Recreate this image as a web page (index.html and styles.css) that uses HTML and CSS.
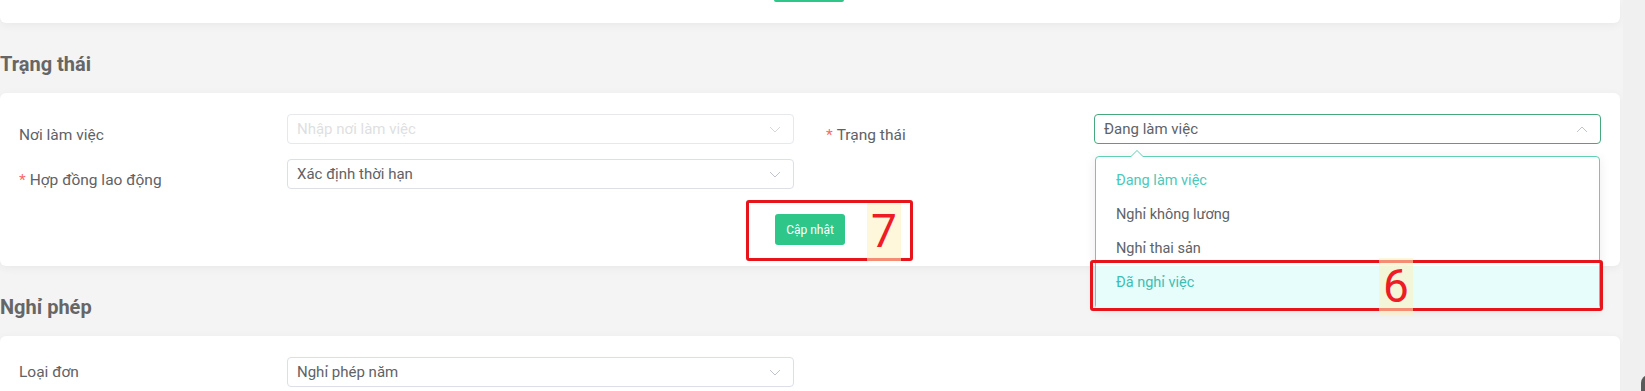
FILE: index.html
```html
<!DOCTYPE html>
<html lang="vi">
<head>
  <meta charset="UTF-8" />
  <meta name="viewport" content="width=device-width, initial-scale=1.0" />
  <title>Trạng thái nhân viên</title>
  <link rel="stylesheet" href="styles.css">
</head>
<body>
  <div class="page">
    <div class="main">
      <!-- Card phía trên (chỉ thấy phần đáy) -->
      <div class="card card-top">
        <span class="btn-stub"></span>
      </div>

      <h2 class="section-title">Trạng thái</h2>

      <div class="card">
        <div class="form-grid labels-low">
          <div class="form-item">
            <label class="form-label">Nơi làm việc</label>
            <div class="select is-disabled">
              <span class="select-text placeholder">Nhập nơi làm việc</span>
              <svg class="chevron" width="12" height="7" viewBox="0 0 12 7"><polyline points="1,1 6,6 11,1" /></svg>
            </div>
          </div>

          <div class="form-item">
            <label class="form-label"><span class="req">*</span>Trạng thái</label>
            <div class="select is-focus">
              <span class="select-text">Đang làm việc</span>
              <svg class="chevron" width="12" height="7" viewBox="0 0 12 7"><polyline points="1,6 6,1 11,6" /></svg>

              <!-- Danh sách tuỳ chọn -->
              <ul class="dropdown">
                <li class="dropdown-item selected">Đang làm việc</li>
                <li class="dropdown-item">Nghỉ không lương</li>
                <li class="dropdown-item">Nghỉ thai sản</li>
                <li class="dropdown-item hover">Đã nghỉ việc</li>
              </ul>
              <div class="mark mark-6">
                <span class="mark-num">6</span>
              </div>
            </div>
          </div>

          <div class="form-item">
            <label class="form-label"><span class="req">*</span>Hợp đồng lao động</label>
            <div class="select">
              <span class="select-text">Xác định thời hạn</span>
              <svg class="chevron" width="12" height="7" viewBox="0 0 12 7"><polyline points="1,1 6,6 11,1" /></svg>
            </div>
          </div>
          <div class="form-item"></div>
        </div>

        <div class="actions">
          <div class="btn-wrap">
            <button class="btn-primary">Cập nhật</button>
            <div class="mark mark-7">
              <span class="mark-num">7</span>
            </div>
          </div>
        </div>
      </div>

      <h2 class="section-title">Nghỉ phép</h2>

      <div class="card card-last">
        <div class="form-grid">
          <div class="form-item">
            <label class="form-label">Loại đơn</label>
            <div class="select">
              <span class="select-text">Nghỉ phép năm</span>
              <svg class="chevron" width="12" height="7" viewBox="0 0 12 7"><polyline points="1,1 6,6 11,1" /></svg>
            </div>
          </div>
        </div>
      </div>
    </div>

    <div class="track">
      <span class="fab"></span>
    </div>
  </div>
</body>
</html>
```

FILE: styles.css
```css
/* Chung */
body {
  margin: 0;
  background: #f4f4f4;
  font-family: Roboto, "Noto Sans", Arial, sans-serif;
  color: #606266;
  overflow: hidden;
}

.page {
  display: flex;
  height: 391px;
}

.main {
  width: 1620px;
  flex-shrink: 0;
}

.track {
  flex: 1;
  margin-left: 3px;
  background: #f0f0f0;
  position: relative;
}

.fab {
  position: absolute;
  right: -12px;
  bottom: -14px;
  width: 16px;
  height: 30px;
  border-radius: 8px;
  background: #5a5a5a;
}

/* Cards */
.card {
  background: #fff;
  border-radius: 6px;
  box-shadow: 0 2px 10px rgba(0, 0, 0, 0.05);
  padding: 21px 19px;
  position: relative;
}

.card-top {
  height: 23px;
  padding: 0;
  border-radius: 0 0 6px 6px;
  display: flex;
  justify-content: center;
}

.btn-stub {
  width: 70px;
  height: 2px;
  background: #2fc68a;
  border-radius: 0 0 3px 3px;
  margin-left: -2px;
}

.card-last {
  border-radius: 6px 6px 0 0;
}

.section-title {
  margin: 0;
  padding: 30px 0 18px;
  line-height: 22px;
  font-size: 20px;
  font-weight: 700;
  color: #666;
}

/* Formulario */
.form-grid {
  display: grid;
  grid-template-columns: 1fr 1fr;
  column-gap: 32px;
  row-gap: 15px;
}

.form-item {
  display: flex;
  align-items: center;
  min-height: 30px;
}

.form-label {
  width: 268px;
  flex-shrink: 0;
  font-size: 15.5px;
  color: #606266;
}

.labels-low .form-label {
  padding-top: 11px;
}

.req {
  color: #f56c6c;
  margin-right: 4px;
}

.select {
  flex: 1;
  position: relative;
  height: 30px;
  box-sizing: border-box;
  border: 1px solid #dcdfe6;
  border-radius: 4px;
  background: #fff;
  display: flex;
  align-items: center;
  padding: 0 9px;
}

.select.is-disabled {
  border-color: #e6e8ec;
}

.select.is-focus {
  border-color: #47a880;
}

.select-text {
  flex: 1;
  font-size: 15px;
  color: #606266;
}

.select-text.placeholder {
  color: #dedfe2;
}

.chevron {
  fill: none;
  stroke: #c0c4cc;
  stroke-width: 1;
  margin-right: 3px;
}

.is-disabled .chevron {
  stroke: #d6d8dd;
}

/* Desplegable */
.dropdown {
  position: absolute;
  top: calc(100% + 13px);
  left: 0;
  right: 0;
  margin: 0;
  padding: 7px 0 0;
  list-style: none;
  background: #fff;
  border: 1px solid #5fd0b4;
  border-radius: 4px;
  box-shadow: 0 2px 12px rgba(0, 0, 0, 0.08);
  z-index: 5;
}

.dropdown::before,
.dropdown::after {
  content: "";
  position: absolute;
  left: 35px;
  border: 6px solid transparent;
  border-top-width: 0;
}

.dropdown::before {
  top: -7px;
  border-bottom-color: #5fd0b4;
}

.dropdown::after {
  top: -6px;
  border-bottom-color: #fff;
}

.dropdown-item {
  height: 34px;
  line-height: 34px;
  padding: 0 20px;
  font-size: 14.5px;
  color: #606266;
}

.dropdown-item.selected {
  color: #4cc8bc;
}

.dropdown-item.hover {
  height: 42px;
  line-height: 34px;
  background: #e6fdfc;
  color: #3dbdb3;
}

/* Botón */
.actions {
  display: flex;
  justify-content: center;
  margin-top: 25px;
}

.btn-wrap {
  position: relative;
}

.btn-primary {
  width: 70px;
  height: 31px;
  border: none;
  border-radius: 3px;
  background: #2fc68a;
  color: #fff;
  font-family: Roboto, Arial, sans-serif;
  font-size: 12px;
  cursor: pointer;
}

/* Marcas de anotación */
.mark {
  position: absolute;
  border: 3px solid #e8141c;
  border-radius: 3px;
  z-index: 6;
}

.mark-6 {
  left: -5px;
  top: 145px;
  width: 507px;
  height: 45px;
}

.mark-7 {
  left: -29px;
  top: -14px;
  width: 161px;
  height: 55px;
}

.mark-num {
  position: absolute;
  width: 34px;
  text-align: center;
  background: rgba(255, 240, 190, 0.55);
  color: #ee1c25;
  font-family: Roboto, Arial, sans-serif;
  font-size: 46px;
}

.mark-6 .mark-num {
  left: 286px;
  top: -5px;
  height: 57px;
  line-height: 56px;
}

.mark-7 .mark-num {
  left: 118px;
  top: 0;
  height: 58px;
  line-height: 56px;
}
```
